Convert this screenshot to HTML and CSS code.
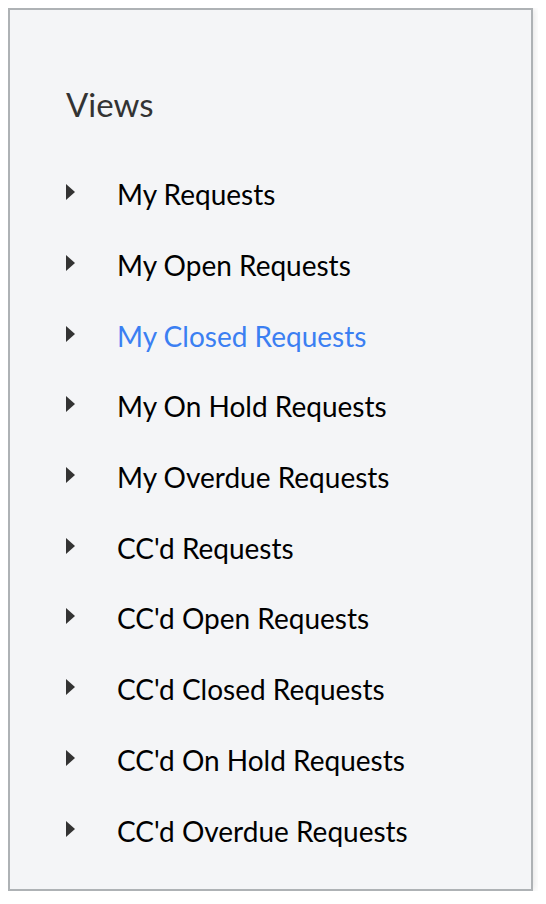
FILE: index.html
```html
<!DOCTYPE html>
<html lang="en">
<head>
    <meta charset="UTF-8">
    <meta name="viewport" content="width=device-width, initial-scale=1.0">
    <title>Views</title>
    <link rel="stylesheet" href="styles.css">
</head>
<body>
    <div class="panel">
        <h2 class="panel-title">Views</h2>
        <ul class="view-list">
            <li class="view-item"><span class="caret"></span><span class="view-name">My Requests</span></li>
            <li class="view-item"><span class="caret"></span><span class="view-name">My Open Requests</span></li>
            <li class="view-item active"><span class="caret"></span><span class="view-name">My Closed Requests</span></li>
            <li class="view-item"><span class="caret"></span><span class="view-name">My On Hold Requests</span></li>
            <li class="view-item"><span class="caret"></span><span class="view-name">My Overdue Requests</span></li>
            <li class="view-item"><span class="caret"></span><span class="view-name">CC'd Requests</span></li>
            <li class="view-item"><span class="caret"></span><span class="view-name">CC'd Open Requests</span></li>
            <li class="view-item"><span class="caret"></span><span class="view-name">CC'd Closed Requests</span></li>
            <li class="view-item"><span class="caret"></span><span class="view-name">CC'd On Hold Requests</span></li>
            <li class="view-item"><span class="caret"></span><span class="view-name">CC'd Overdue Requests</span></li>
        </ul>
    </div>
</body>
</html>
```

FILE: styles.css
```css
body {
    font-family: Lato, "Open Sans", sans-serif;
    background-color: #ffffff;
    margin: 8px;
}
.panel {
    box-sizing: border-box;
    width: 525px;
    height: 883px;
    background: #f4f5f7;
    border: 2px solid #aeb2b5;
    box-shadow: 0 0 8px rgba(0, 0, 0, 0.15);
    padding: 74px 56px 0 56px;
}
.panel-title {
    margin: 0 0 35px 0;
    font-size: 33px;
    font-weight: normal;
    line-height: 40px;
    color: #333333;
}
.view-list {
    list-style: none;
    margin: 0;
    padding: 0;
}
.view-item {
    display: flex;
    align-items: center;
    height: 70.7px;
    font-size: 28px;
    color: #000000;
}
.caret {
    width: 0;
    height: 0;
    border-top: 8px solid transparent;
    border-bottom: 8px solid transparent;
    border-left: 9px solid #333333;
    margin-right: 42px;
    margin-bottom: 4px;
}
.view-item.active {
    color: #3b7ff2;
}
```
